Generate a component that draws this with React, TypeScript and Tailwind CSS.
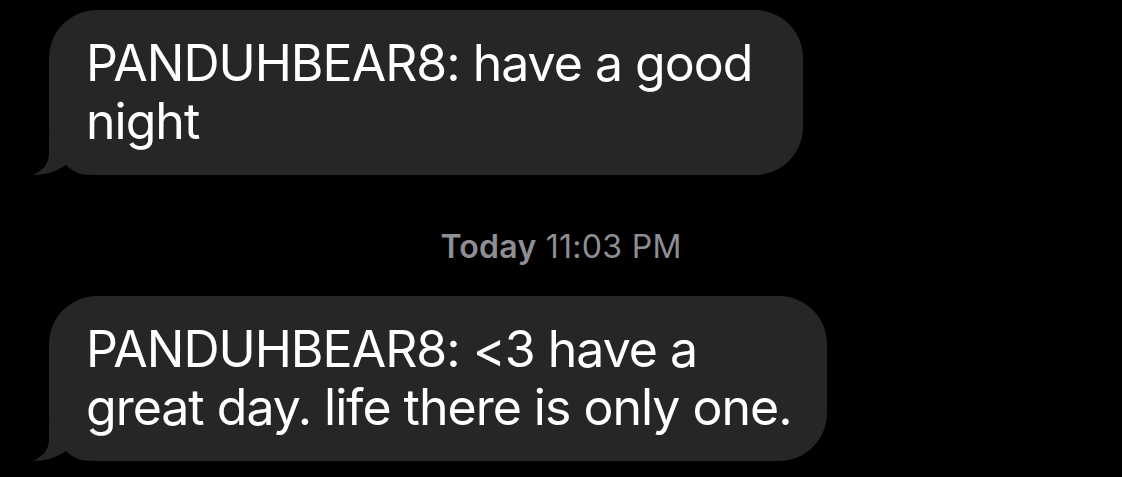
import React from 'react'

function Tail() {
  return (
    <svg className="absolute left-[-17px] bottom-0" width="60" height="42" viewBox="0 0 60 42">
      <path d="M17 0 L17 20 C17 31 10 39 0 42 C12 42 24 39 34 32 C40 38 48 42 58 42 L58 0 Z" fill="#262628" />
    </svg>
  )
}

function Bubble({ lines, width }: { lines: string[]; width: string }) {
  return (
    <div className={`relative ml-[49px] ${width} h-[165px] rounded-[48px] bg-[#262628] pl-[37px] pt-[24px]`}>
      <Tail />
      <div className="relative text-white text-[50px] leading-[58px] tracking-[-1px]" style={{ fontFamily: 'Inter, "Liberation Sans", sans-serif' }}>
        {lines.map((l, i) => (
          <div key={i} className="whitespace-nowrap">{l}</div>
        ))}
      </div>
    </div>
  )
}

export default function App() {
  return (
    <div className="w-[1122px] h-[477px] bg-black overflow-hidden pt-[10px]">
      <Bubble width="w-[754px]" lines={['PANDUHBEAR8: have a good', 'night']} />
      <div className="h-[121px] pt-[23px] flex items-center justify-center text-[#8e8e93] text-[32px] tracking-[0.3px]" style={{ fontFamily: 'Inter, "Liberation Sans", sans-serif' }}>
        <span className="font-semibold">Today</span>
        <span className="ml-[9px]">11:03 PM</span>
      </div>
      <Bubble width="w-[778px]" lines={['PANDUHBEAR8: <3 have a', 'great day. life there is only one.']} />
    </div>
  )
}
